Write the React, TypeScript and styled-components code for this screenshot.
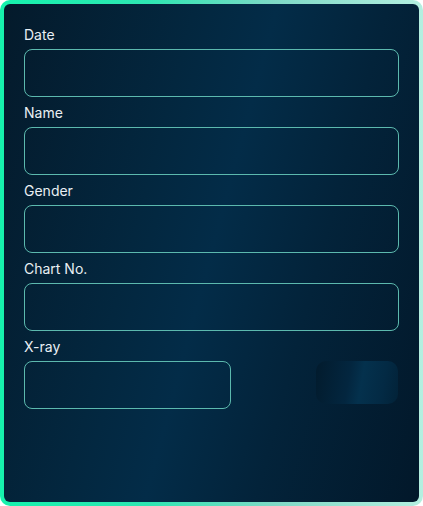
import styled, { createGlobalStyle } from "styled-components";

const GlobalStyle = createGlobalStyle`
  html, body {
    margin: 0;
    padding: 0;
    background: #ffffff;
  }
  * {
    box-sizing: border-box;
  }
`;

const Frame = styled.div`
  width: 423px;
  height: 506px;
  padding: 4px;
  border-radius: 10px;
  background: linear-gradient(90deg, #16f2ad 0%, #2ee6b2 35%, #7fd9c6 65%, #b4efe0 100%);
  font-family: Inter, "Noto Sans", sans-serif;
`;

const Panel = styled.div`
  height: 100%;
  border-radius: 6px;
  padding: 21px 20px;
  background: linear-gradient(105deg, #041a2b 0%, #03273f 35%, #032c48 50%, #03233a 70%, #02182a 100%);
  display: flex;
  flex-direction: column;
`;

const Field = styled.div`
  display: flex;
  flex-direction: column;
  margin-bottom: 6px;
`;

const Label = styled.label`
  font-size: 14px;
  line-height: 20px;
  color: #e9eff3;
  margin-bottom: 4px;
`;

const Input = styled.input<{ $width?: number }>`
  width: ${(p) => (p.$width ? `${p.$width}px` : "100%")};
  height: 48px;
  border-radius: 8px;
  border: 1px solid #5cb9ae;
  background: transparent;
  outline: none;
  color: #e9eff3;
  font-family: inherit;
  font-size: 14px;
  padding: 0 12px;
`;

const Row = styled.div`
  display: flex;
  align-items: flex-start;
  justify-content: space-between;
`;

const UploadButton = styled.button`
  width: 82px;
  height: 43px;
  margin-right: 1px;
  border: none;
  border-radius: 10px;
  background: linear-gradient(100deg, #021b2d 0%, #03263f 40%, #04314d 55%, #032a44 80%, #022238 100%);
  cursor: pointer;
`;

const fields = ["Date", "Name", "Gender", "Chart No."];

export default function App() {
  return (
    <>
      <GlobalStyle />
      <Frame>
        <Panel>
          {fields.map((f) => (
            <Field key={f}>
              <Label>{f}</Label>
              <Input type="text" />
            </Field>
          ))}
          <Field>
            <Label>X-ray</Label>
            <Row>
              <Input type="text" $width={207} />
              <UploadButton />
            </Row>
          </Field>
        </Panel>
      </Frame>
    </>
  );
}
